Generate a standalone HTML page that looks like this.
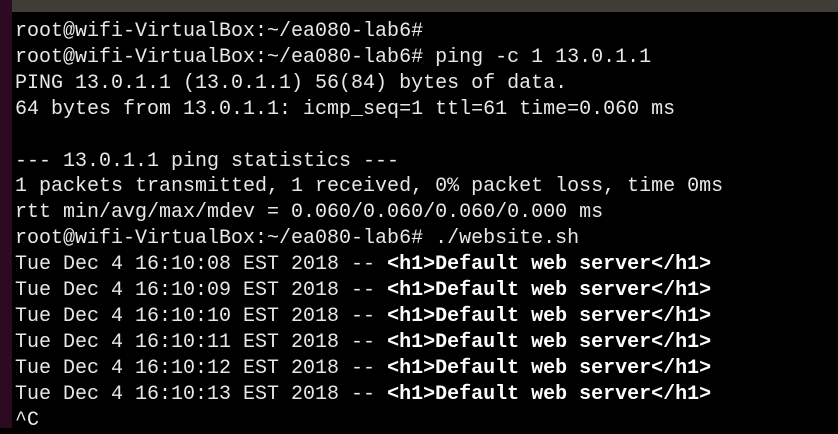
<!DOCTYPE html><html><head><style>
body{margin:0;width:838px;height:428px;overflow:hidden;background:#000;position:relative}
#l{position:absolute;left:0;top:0;width:12px;height:428px;background:#2c0b22}
#t{position:absolute;left:12px;top:0;width:826px;height:12px;background:#3f3d38}
pre{position:absolute;left:15px;top:19px;margin:0;font-family:"Liberation Mono",monospace;font-size:20px;line-height:25.9px;color:#e8e8e8;letter-spacing:0}
b{color:#fff}
</style></head><body><div id="l"></div><div id="t"></div>
<pre>root@wifi-VirtualBox:~/ea080-lab6#
root@wifi-VirtualBox:~/ea080-lab6# ping -c 1 13.0.1.1
PING 13.0.1.1 (13.0.1.1) 56(84) bytes of data.
64 bytes from 13.0.1.1: icmp_seq=1 ttl=61 time=0.060 ms

--- 13.0.1.1 ping statistics ---
1 packets transmitted, 1 received, 0% packet loss, time 0ms
rtt min/avg/max/mdev = 0.060/0.060/0.060/0.000 ms
root@wifi-VirtualBox:~/ea080-lab6# ./website.sh
Tue Dec 4 16:10:08 EST 2018 -- <b>&lt;h1&gt;Default web server&lt;/h1&gt;</b>
Tue Dec 4 16:10:09 EST 2018 -- <b>&lt;h1&gt;Default web server&lt;/h1&gt;</b>
Tue Dec 4 16:10:10 EST 2018 -- <b>&lt;h1&gt;Default web server&lt;/h1&gt;</b>
Tue Dec 4 16:10:11 EST 2018 -- <b>&lt;h1&gt;Default web server&lt;/h1&gt;</b>
Tue Dec 4 16:10:12 EST 2018 -- <b>&lt;h1&gt;Default web server&lt;/h1&gt;</b>
Tue Dec 4 16:10:13 EST 2018 -- <b>&lt;h1&gt;Default web server&lt;/h1&gt;</b>
^C</pre></body></html>
